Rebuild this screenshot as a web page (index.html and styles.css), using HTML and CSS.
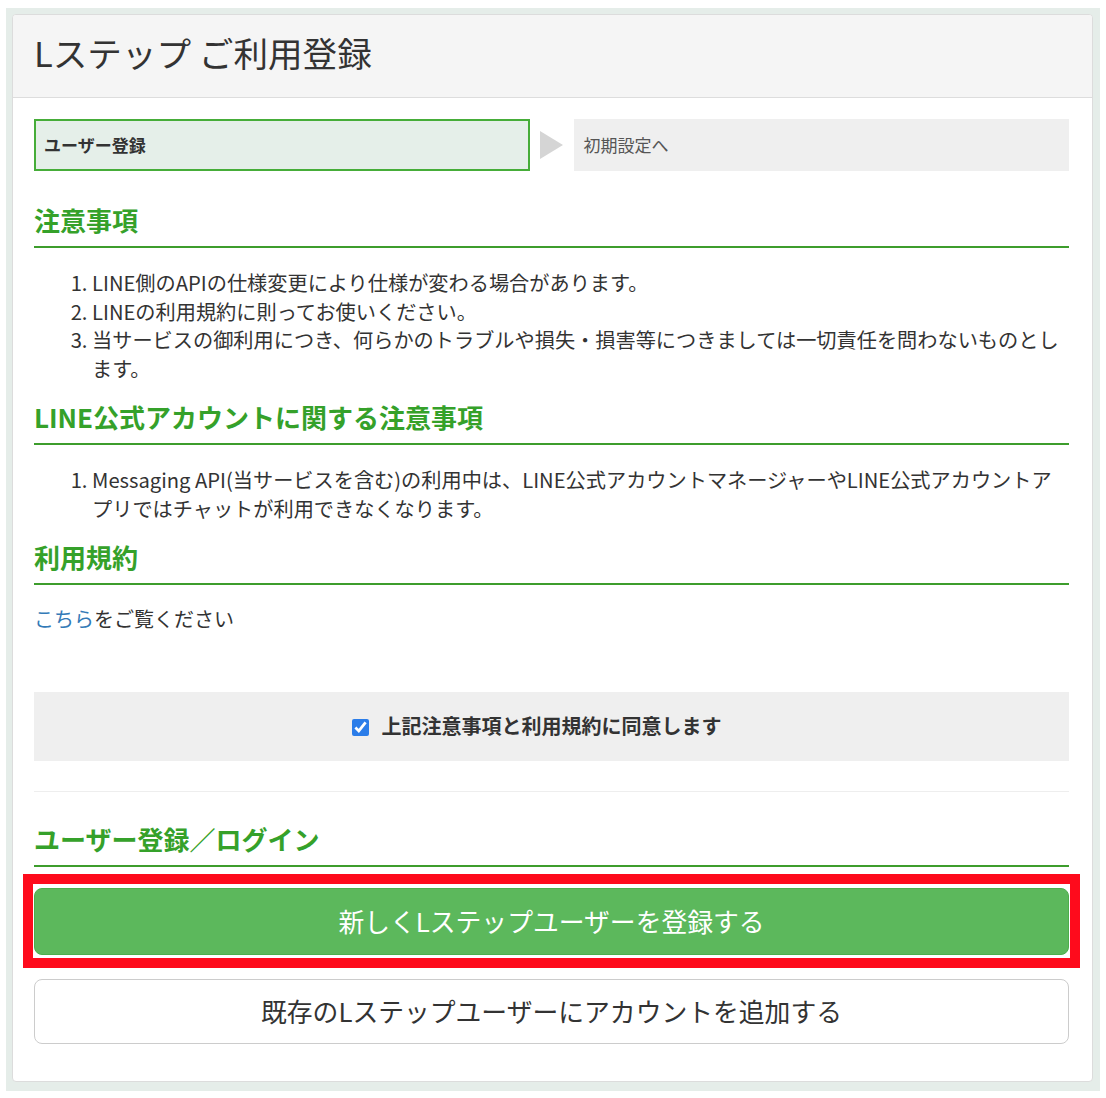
FILE: index.html
```html
<!DOCTYPE html>
<html lang="ja">
<head>
<meta charset="utf-8">
<title>Lステップ ご利用登録</title>
<link rel="stylesheet" href="styles.css">
</head>
<body>
<div class="frame">
  <div class="card">
    <div class="card-header">
      <h1 class="title">Lステップ ご利用登録</h1>
    </div>
    <div class="card-body">
      <div class="steps">
        <div class="step step-active">ユーザー登録</div>
        <div class="step-arrow"><span class="tri"></span></div>
        <div class="step step-next">初期設定へ</div>
      </div>

      <h2 class="sec-title sec-first">注意事項</h2>
      <ol class="notes">
        <li>LINE側のAPIの仕様変更により仕様が変わる場合があります。</li>
        <li>LINEの利用規約に則ってお使いください。</li>
        <li>当サービスの御利用につき、何らかのトラブルや損失・損害等につきましては一切責任を問わないものとします。</li>
      </ol>

      <h2 class="sec-title">LINE公式アカウントに関する注意事項</h2>
      <ol class="notes">
        <li>Messaging API(当サービスを含む)の利用中は、LINE公式アカウントマネージャーやLINE公式アカウントアプリではチャットが利用できなくなります。</li>
      </ol>

      <h2 class="sec-title">利用規約</h2>
      <p class="terms"><a href="#" class="link">こちら</a>をご覧ください</p>

      <div class="agree">
        <label class="agree-label"><input type="checkbox" class="agree-check" checked>上記注意事項と利用規約に同意します</label>
      </div>

      <hr class="divider">

      <h2 class="sec-title sec-login">ユーザー登録／ログイン</h2>
      <div class="highlight">
        <button class="btn btn-primary" type="button">新しくLステップユーザーを登録する</button>
      </div>
      <button class="btn btn-default" type="button">既存のLステップユーザーにアカウントを追加する</button>
    </div>
  </div>
</div>
</body>
</html>
```
FILE: styles.css
```css
* { box-sizing: border-box; }

html, body {
  margin: 0;
  padding: 0;
  background: #ffffff;
}

body {
  font-family: "Noto Sans CJK JP", "Noto Sans", "Liberation Sans", sans-serif;
  font-size: 20px;
  line-height: 1.428571;
  color: #333333;
}

.frame {
  margin: 8px 6px 8px 6px;
  padding: 6px 7px 9px 6px;
  background: #e5ede9;
}

.card {
  background: #ffffff;
  border: 1px solid #dcdcdc;
  border-radius: 4px;
  overflow: hidden;
}

.card-header {
  background: #f5f5f5;
  border-bottom: 1px solid #dddddd;
  height: 83px;
  padding: 0 21px 6px 21px;
  display: flex;
  align-items: center;
}

.title {
  margin: 0;
  font-size: 34.6px;
  font-weight: 400;
  line-height: 1.2;
  color: #333333;
}

.card-body {
  padding: 21px 23px 37px 21px;
}

.steps {
  display: grid;
  grid-template-columns: 1fr 44px 1fr;
  height: 52px;
}

.step {
  display: flex;
  align-items: center;
  font-size: 17px;
}

.step-active {
  background: #e5efe9;
  border: 2px solid #46ad39;
  padding-left: 8px;
  font-weight: 700;
  color: #333333;
}

.step-next {
  background: #efefef;
  padding-left: 10px;
  color: #555555;
}

.step-arrow {
  display: flex;
  align-items: center;
  padding-left: 10px;
}

.tri {
  width: 0;
  height: 0;
  border-left: 23px solid #d5d5d5;
  border-top: 14px solid transparent;
  border-bottom: 14px solid transparent;
}

.sec-title {
  margin: 19px 0 0 0;
  font-size: 26px;
  line-height: 30px;
  font-weight: 700;
  color: #35a12a;
  padding-bottom: 11px;
  border-bottom: 2px solid #3d9d2c;
}

.sec-first { margin-top: 34px; }

.notes {
  margin: 21px 0 0 0;
  padding-left: 58px;
  font-size: 20.2px;
  line-height: 28.57px;
}

.notes li { margin: 0; }

.terms {
  margin: 20px 0 0 0;
}

.link {
  color: #337ab7;
  text-decoration: none;
}

.agree {
  margin-top: 58px;
  background: #efefef;
  padding: 20px 30px 20px 0;
  display: flex;
  justify-content: center;
}

.agree-label {
  display: flex;
  align-items: center;
  font-weight: 700;
  font-size: 20px;
  color: #333333;
}

.agree-check {
  width: 17px;
  height: 17px;
  margin: 2px 13px 0 0;
  accent-color: #2b7de9;
}

.divider {
  margin: 30px 0 0 0;
  border: 0;
  border-top: 1px solid #eeeeee;
}

.sec-login { margin-top: 32px; }

.highlight {
  position: relative;
  margin-top: 21px;
}

.highlight::after {
  content: "";
  position: absolute;
  top: -14px;
  bottom: -13px;
  left: -11px;
  right: -11px;
  border: 10px solid #fe0b1c;
  pointer-events: none;
}

.btn {
  display: block;
  width: 100%;
  font-family: inherit;
  font-size: 25.8px;
  line-height: 1.4;
  border-radius: 8px;
  text-align: center;
  cursor: pointer;
}

.btn-primary {
  height: 67px;
  background: #5cb85c;
  border: 1px solid #4cae4c;
  color: #ffffff;
}

.btn-default {
  margin-top: 24px;
  height: 65px;
  background: #ffffff;
  border: 1px solid #cccccc;
  color: #333333;
}
```
